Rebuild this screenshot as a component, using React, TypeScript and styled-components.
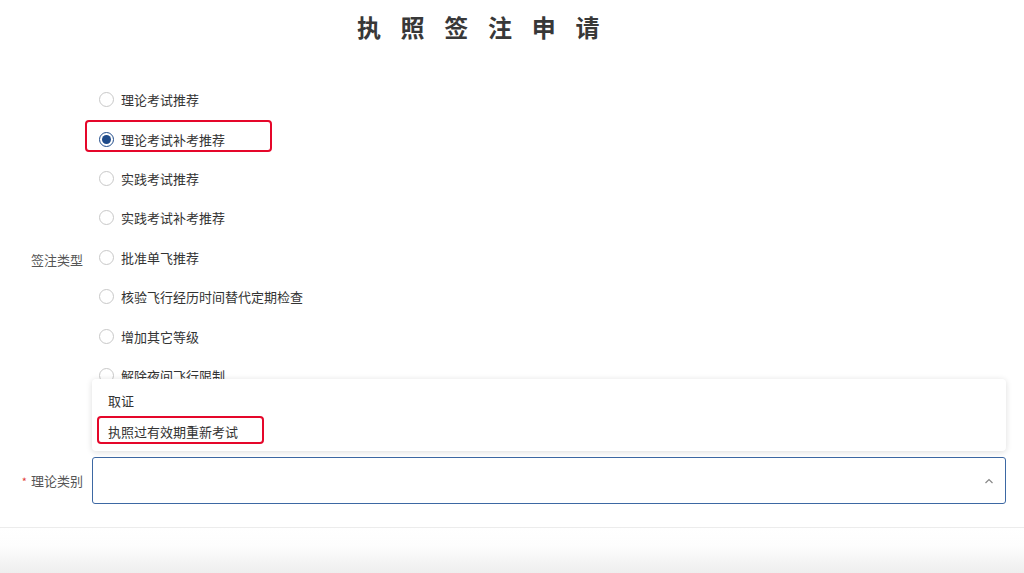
import React from "react";
import styled, { createGlobalStyle } from "styled-components";

const Global = createGlobalStyle`
  html, body { margin: 0; padding: 0; background: #fff; }
  body { font-family: "Noto Sans CJK SC", "Noto Sans", sans-serif; color: #333; }
  * { box-sizing: border-box; }
`;

const Page = styled.div`
  width: 1024px;
  height: 573px;
  overflow: hidden;
  display: flex;
  flex-direction: column;
  background: #fff;
`;

const Title = styled.h1`
  margin: 0;
  height: 56px;
  display: flex;
  align-items: center;
  justify-content: center;
  padding-right: 48px;
  padding-bottom: 3px;
  font-size: 24px;
  font-weight: 700;
  letter-spacing: 19.7px;
  color: #383838;
`;

const Form = styled.div`
  padding-top: 24px;
  padding-right: 18px;
  display: flex;
  flex-direction: column;
`;

const FormRow = styled.div<{ $align: "start" | "center"; $mt?: number }>`
  display: grid;
  grid-template-columns: 92px 1fr;
  align-items: ${(p) => p.$align};
  margin-top: ${(p) => p.$mt ?? 0}px;
`;

const Label = styled.label<{ $offset?: number }>`
  text-align: right;
  padding-right: 9px;
  font-size: 13px;
  line-height: 20px;
  color: #555;
  margin-top: ${(p) => p.$offset ?? 0}px;
`;

const Req = styled.span`
  color: #e23b3b;
  font-size: 11px;
  margin-right: 4px;
`;

const RadioGroup = styled.div`
  display: flex;
  flex-direction: column;
  padding-left: 7px;
`;

const RadioRow = styled.div`
  position: relative;
  height: 39.4px;
  display: flex;
  align-items: center;
  gap: 7px;
  font-size: 13px;
  color: #333;
`;

const Circle = styled.span<{ $checked: boolean }>`
  width: 15px;
  height: 15px;
  border-radius: 50%;
  border: 1px solid ${(p) => (p.$checked ? "#1f4b8a" : "#c8c8c8")};
  background: #fff;
  display: flex;
  align-items: center;
  justify-content: center;
  flex: none;
  &::after {
    content: "";
    width: 9px;
    height: 9px;
    border-radius: 50%;
    background: ${(p) => (p.$checked ? "#1f4b8a" : "transparent")};
  }
`;

const Highlight = styled.span<{ $l: number; $t: number; $w: number; $h: number }>`
  position: absolute;
  left: ${(p) => p.$l}px;
  top: ${(p) => p.$t}px;
  width: ${(p) => p.$w}px;
  height: ${(p) => p.$h}px;
  border: 2px solid #e5072a;
  border-radius: 4px;
  pointer-events: none;
`;

const SelectWrap = styled.div`
  position: relative;
`;

const SelectBox = styled.div`
  height: 47px;
  border: 1px solid #3d68a3;
  border-radius: 3px;
  display: flex;
  align-items: center;
  justify-content: flex-end;
  padding-right: 11px;
  background: #fff;
`;

const Menu = styled.div`
  position: absolute;
  left: 0;
  right: 0;
  bottom: calc(100% + 6px);
  background: #fff;
  border-radius: 4px;
  box-shadow: 0 1px 6px rgba(0, 0, 0, 0.14);
  padding: 6px 0 4px;
`;

const MenuItem = styled.div`
  position: relative;
  height: 31px;
  display: flex;
  align-items: center;
  padding-left: 16px;
  font-size: 13px;
  color: #333;
`;

const Divider = styled.div`
  margin-top: 23px;
  height: 1px;
  background: #ececec;
`;

const Footer = styled.div`
  flex: 1;
  background: linear-gradient(#ffffff 0%, #fdfdfd 40%, #eeeeee 100%);
`;

const options = [
  "理论考试推荐",
  "理论考试补考推荐",
  "实践考试推荐",
  "实践考试补考推荐",
  "批准单飞推荐",
  "核验飞行经历时间替代定期检查",
  "增加其它等级",
  "解除夜间飞行限制",
];

export default function App() {
  return (
    <Page>
      <Global />
      <Title>执照签注申请</Title>
      <Form>
        <FormRow $align="start">
          <Label $offset={170}>签注类型</Label>
          <RadioGroup>
            {options.map((o, i) => (
              <RadioRow key={o}>
                <Circle $checked={i === 1} />
                <span>{o}</span>
                {i === 1 && <Highlight $l={-14} $t={1} $w={187} $h={32} />}
              </RadioRow>
            ))}
          </RadioGroup>
        </FormRow>
        <FormRow $align="center" $mt={62}>
          <Label>
            <Req>*</Req>理论类别
          </Label>
          <SelectWrap>
            <Menu>
              <MenuItem>取证</MenuItem>
              <MenuItem>
                执照过有效期重新考试
                <Highlight $l={5} $t={0} $w={167} $h={28} />
              </MenuItem>
            </Menu>
            <SelectBox>
              <svg width="10" height="6" viewBox="0 0 10 6" fill="none">
                <path d="M1.5 5 L5 1.5 L8.5 5" stroke="#888" strokeWidth="1.2" />
              </svg>
            </SelectBox>
          </SelectWrap>
        </FormRow>
      </Form>
      <Divider />
      <Footer />
    </Page>
  );
}
